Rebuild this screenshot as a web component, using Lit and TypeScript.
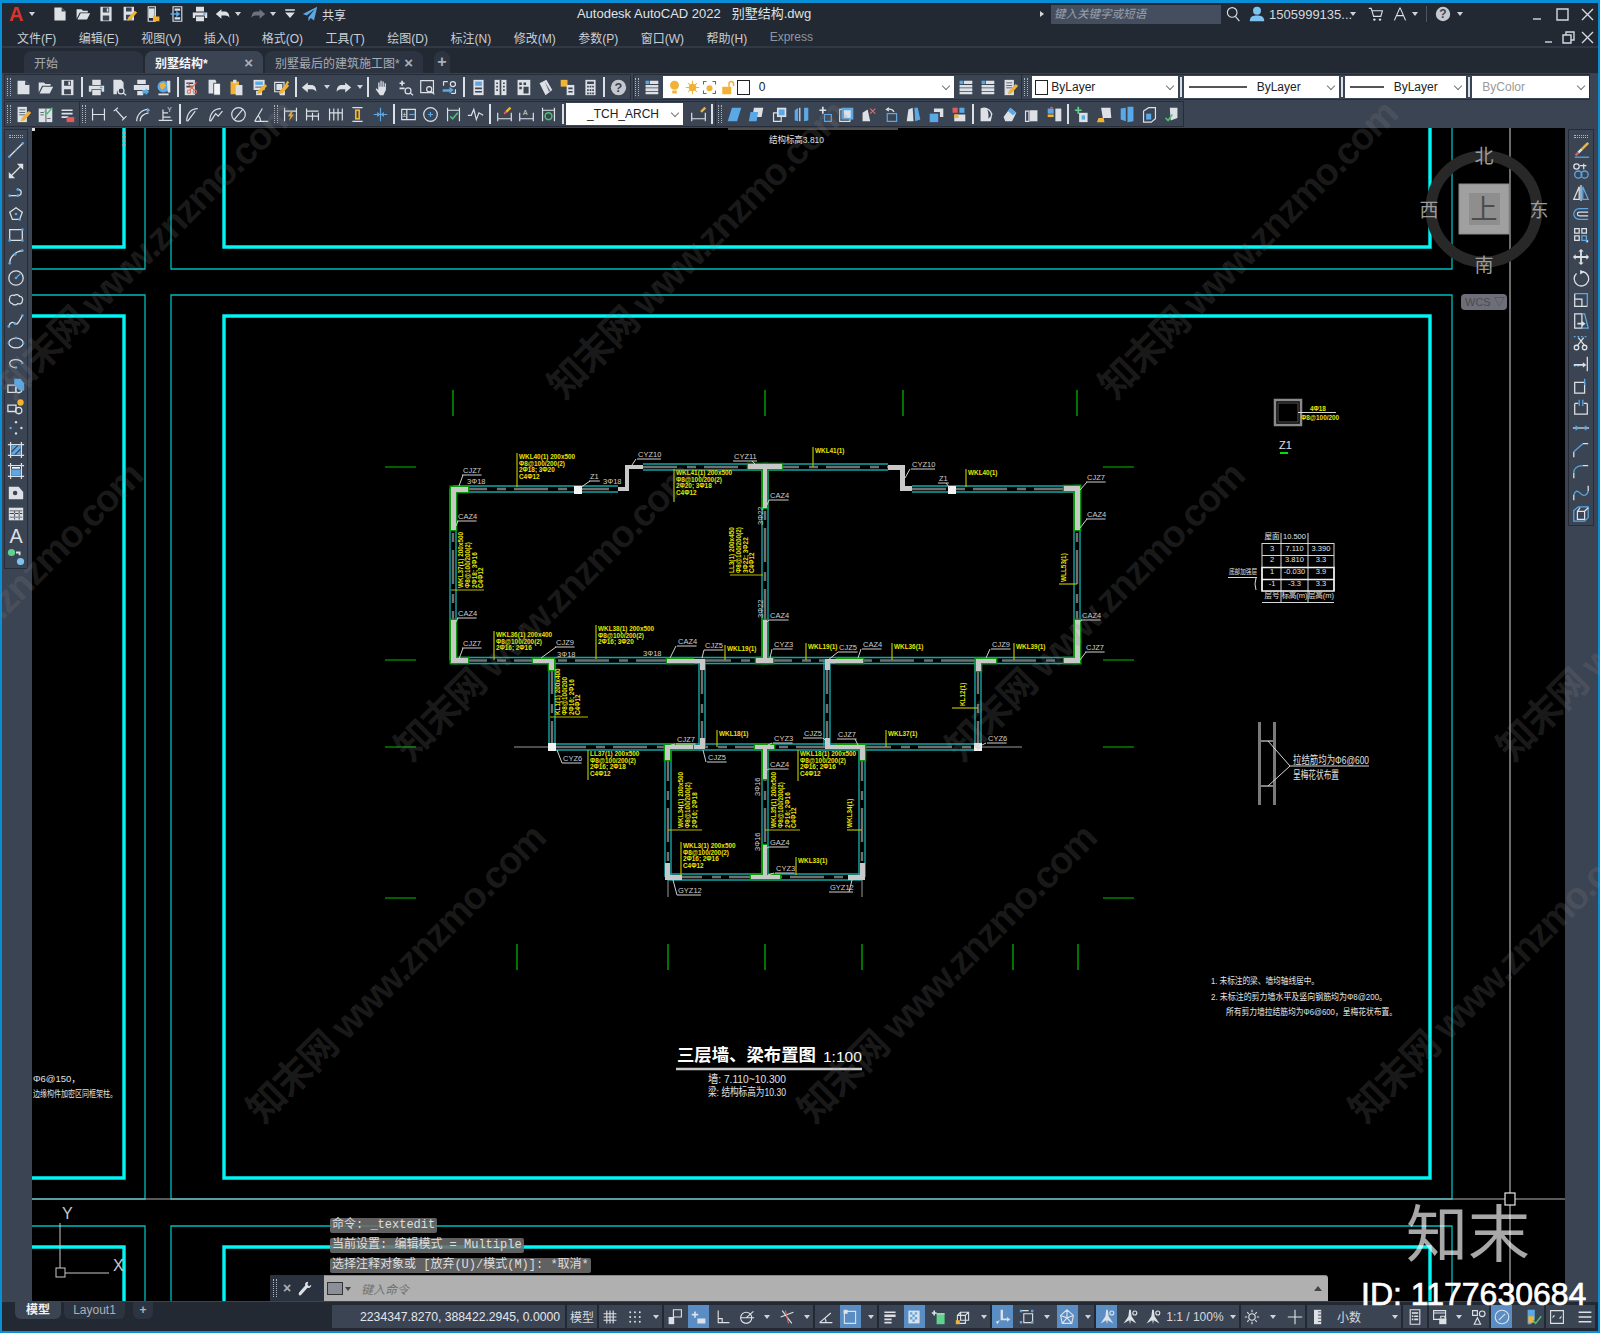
import { LitElement, html, svg, css } from 'lit';
import { customElement } from 'lit/decorators.js';

// icon fragments, all on a 20x20 box
const pencil = svg`<path class="of" d="M16 6l3 2-8 9-4 1 1-4z"/>`;
const ICONS: Record<string, any> = {
  new: svg`<path class="w" d="M3 2h9l5 5v11H3z"/><path class="dk" d="M12 2v5h5z"/>`,
  open: svg`<path class="w" d="M2 4h6l2 2h6v2H6l-4 8zM7 9h12l-4 8H3z"/>`,
  save: svg`<path class="w" d="M3 1h14v18H3z"/><path class="dk" d="M6 2h8v6H6zM6 12h8v6H6z"/><path class="w" d="M11 3h2v4h-2z"/>`,
  saveas: svg`<path class="w" d="M2 1h13v17H2z"/><path class="dk" d="M5 2h7v5H5zM5 11h7v6H5z"/>${pencil}`,
  webopen: svg`<path class="s" d="M4 1h9v18H4z"/><path class="w" d="M5 3h7v12H5z"/><path class="of" d="M10 12h3l1 1h4v6h-8z"/>`,
  webshare: svg`<path class="s" d="M5 1h11v18H5z"/><path class="w" d="M7 3h7v3H7zM7 14h7v3H7z"/><path class="bf" d="M2 9h7V6l5 4-5 4v-3H2z"/>`,
  print: svg`<path class="w" d="M5 1h10v6H5zM1 8h18v7h-3v-3H4v3H1zM5 13h10v6H5z"/><path class="bf" d="M14 9h3v2h-3z"/>`,
  undo: svg`<path class="w" d="M8 4 1 10l7 6v-4h5c2 0 4 1 5 3 0-5-2-8-6-8H8z"/>`,
  redo: svg`<path class="w" d="M12 4l7 6-7 6v-4H7c-2 0-4 1-5 3 0-5 2-8 6-8h4z"/>`,
  redodim: svg`<path class="m" d="M12 4l7 6-7 6v-4H7c-2 0-4 1-5 3 0-5 2-8 6-8h4z"/>`,
  qmenu: svg`<path class="w" d="M4 4h12v2H4zM4 8h12l-6 7z"/>`,
  plane: svg`<path class="bf" d="M19 1 1 10l5 2 10-8-8 10v5l3-4 4 3z"/>`,
  preview: svg`<path class="w" d="M4 1h9l3 3v7h-5l-3 4v3H4z"/><circle class="s" cx="13" cy="14" r="3.5"/><path class="s" d="M15.5 16.5 19 19"/>`,
  plot: svg`<path class="w" d="M5 1h10v5H5zM1 7h18v6H1zM5 14h7v5H5z"/><path class="bf" d="M11 13h4v-2l4 4-4 4v-2h-4z"/>`,
  publish: svg`<circle class="bf" cx="10" cy="9" r="7"/><path class="of" d="M6 5l5-1 2 4-4 5-3-3z"/><path class="w" d="M4 17h12v2H4zM14 2h4v14h-3z"/>`,
  cut: svg`<path class="w" d="M2 1h12v18H2z"/><path class="dk" d="M4 4h8v2H4zM4 8h8v2H4z"/><circle class="rs" cx="7" cy="15" r="2"/><circle class="rs" cx="14" cy="15" r="2"/><path class="rs" d="M8 13 16 4M13 13 5 4"/>`,
  copy: svg`<path class="w" d="M3 1h8l1 2v14H3z"/><path class="w2" d="M9 5h8v14H9z"/>`,
  paste: svg`<path class="of" d="M3 3h10v15H3z"/><path class="w" d="M6 1h4v4H6zM9 7h8v12H9z"/>`,
  paste2: svg`<path class="w" d="M3 1h13v12H3z"/><path class="bf" d="M5 3h9v4H5z"/><path class="dk" d="M5 9h9v1H5z"/><path class="w" d="M6 14h7v5H6z"/>${pencil}`,
  match: svg`<path class="s" d="M2 4h11v11H2z"/><path class="w" d="M4 6h7v7H4zM8 14h6v5H8z"/><path class="of" d="M14 7l3-5 2 2-4 5z"/>${pencil}`,
  pan: svg`<path class="w" d="M5 9V4h1.500v5h1V2H9v7h1V3h1.500v6h1V5H14v8l-3 6H7l-5-7 1-1 2 2z"/>`,
  zrt: svg`<path class="w" d="M5 2h2v2h2v2H7v2H5V6H3V4h2zM3 10h6v2H3z"/><circle class="s" cx="13" cy="14" r="3.500"/><path class="s" d="M15.500 16.500 19 19"/>`,
  zwin: svg`<path class="s" d="M2 2h15v14H2z"/><circle class="s" cx="12" cy="12" r="3"/><path class="s" d="M14 14l4 4"/>`,
  zprev: svg`<path class="s" d="M3 3h5M3 3v5M17 17h-5M17 17v-5"/><path class="bf" d="M2 12h8V9l5 4-5 4v-2H2z"/><circle class="s" cx="14" cy="6" r="3"/>`,
  props: svg`<path class="w" d="M4 1h12v18H4z"/><path class="bf" d="M6 3h8v5H6z"/><path class="dk" d="M6 10h8v2H6zM6 14h8v2H6z"/>`,
  grid4: svg`<path class="w" d="M3 1h14v18H3z"/><path class="dk" d="M9 1h2v18H9zM5 4h2v2H5zM5 8h2v2H5zM5 12h2v2H5zM13 4h2v2h-2zM13 8h2v2h-2zM13 12h2v2h-2z"/>`,
  pal: svg`<path class="w" d="M3 1h15v18H3z"/><path class="dk" d="M5 4h3v3H5zM10 4h3v3h-3zM5 9h3v3H5zM10 9h6v8h-6z"/>`,
  sheet: svg`<path class="w" d="M3 5l8-4 7 12-8 6z"/><path class="m" d="M9 3l7 11-2 1z"/>`,
  markup: svg`<path class="of" d="M2 1h8v8H2z"/><path class="w" d="M9 7h9v12H9z"/><path class="dk" d="M11 10h5v2h-5zM11 14h5v2h-5z"/>`,
  calc: svg`<path class="w" d="M4 1h12v18H4z"/><path class="dk" d="M6 3h8v3H6zM6 8h2v2H6zM9 8h2v2H9zM12 8h2v2h-2zM6 12h2v2H6zM9 12h2v2H9zM12 12h2v2h-2zM6 16h2v2H6zM9 16h2v2H9zM12 16h2v2h-2z"/>`,
  help: svg`<circle class="m2" cx="10" cy="10" r="9"/><text class="qm" x="10" y="15" text-anchor="middle">?</text>`,
  layers: svg`<path class="w" d="M8 2h10v4H8zM3 7h15v3H3zM3 11h15v3H3zM3 15h15v3H3z"/><path class="bf" d="M3 2h4v4H3z"/>`,
  note: svg`<path class="w" d="M3 1h11v18H3z"/><path class="dk" d="M5 4h7v1H5zM5 7h7v1H5zM5 10h7v1H5z"/>${pencil}`,
  check: svg`<path class="w" d="M2 3h16v16H2z"/><path class="dk" d="M10 3h1v16h-1zM4 7h4v1H4zM4 10h4v1H4zM12 14h4v1h-4z"/><path class="gs" d="M9 6l3 3 6-7"/>`,
  eras: svg`<path class="w" d="M3 4h13v2H3zM3 8h13v2H3zM3 12h8v2H3z"/><path class="rf" d="M9 13h9v6H9z"/>`,
  dimlin: svg`<path class="s" d="M3 3v14M17 3v14M3 10h14"/>`,
  dimal: svg`<path class="s" d="M2 6l5-4M12 17l5-5M4 4l10 11"/>`,
  dimarc: svg`<path class="s" d="M2 18c0-8 6-14 14-14M6 18c0-6 4-9 10-10"/><path class="bf" d="M14 2l4 3-4 3z"/>`,
  dimord: svg`<path class="s" d="M2 17h16M7 17V4M7 8h6M7 13h9"/><text class="tiny" x="12" y="7">Y</text>`,
  dimrad: svg`<path class="s" d="M2 18c0-9 5-15 13-15M3 18 12 6"/>`,
  dimjog: svg`<path class="s" d="M2 18c0-9 5-15 13-15M3 18l6-9 3 3 5-6"/>`,
  dimdia: svg`<circle class="s" cx="10" cy="10" r="8"/><path class="s" d="M5 16 15 4"/>`,
  dimang: svg`<path class="s" d="M2 18h16M2 18 11 3M9 18c0-3-1-5-3-7"/>`,
  dimq: svg`<path class="s" d="M3 2v16M17 2v16M3 6h14"/><path class="of" d="M11 6l-4 6h3l-2 6 6-8h-3l2-4z"/>`,
  dimbase: svg`<path class="s" d="M3 3v14M10 8v9M17 8v9M3 6h14M3 12h14"/>`,
  dimcont: svg`<path class="s" d="M3 3v14M8 3v14M13 3v14M18 3v14M3 8h15"/>`,
  dimsp: svg`<path class="s" d="M4 2h12M4 18h12"/><path class="of" d="M7 4h6v12H7z"/><path class="dk" d="M9 6h2v8H9z"/>`,
  dimbr: svg`<path class="bs" d="M10 2v16M2 10h5M13 10h5"/><path class="bf" d="M6 7l4 3-4 3zM14 7l-4 3 4 3z"/>`,
  tol: svg`<path class="s" d="M2 4h16v12H2zM8 4v12"/><text class="tiny" x="3" y="13">±</text><path class="bs" d="M11 10h6"/>`,
  center: svg`<circle class="s" cx="10" cy="10" r="8"/><path class="bs" d="M10 7v6M7 10h6"/>`,
  inspect: svg`<path class="s" d="M3 2v16M17 2v16M3 5h14"/><path class="gs" d="M6 12l3 3 6-7"/>`,
  jog: svg`<path class="s" d="M1 11h4l3-7 3 12 3-8 5 3"/>`,
  dimtedit: svg`<path class="s" d="M2 18V8M18 18V8M2 15h16"/><path class="of" d="M11 6l5-5 2 2-5 5z"/><path class="rf" d="M9 8l2-2 2 2-3 2z"/>`,
  dimtxt: svg`<path class="s" d="M2 18V8M18 18V8M2 15h16"/><text class="tiny" x="6" y="10">A</text>`,
  dimup: svg`<path class="s" d="M3 2v16M17 2v16M3 5h14"/><circle class="gs" cx="10" cy="12" r="4"/>`,
  dimst: svg`<path class="s" d="M2 18V8M18 18V8M2 15h16"/><path class="of" d="M12 6l5-5 2 2-5 5z"/>`,
  solbox: svg`<path class="bf" d="M7 2h11l-5 16H2z"/>`,
  solbox2: svg`<path class="w" d="M7 2h11l-2 11H5z"/><path class="bf" d="M3 7h9l-2 11H1z"/>`,
  solbox3: svg`<path class="w" d="M7 2h11v11H7z"/><path class="s" d="M3 8h9v10H3z"/><path class="bf" d="M9 4h7v7H9z"/>`,
  solwalls: svg`<path class="bf" d="M2 5l4-3v16l-4-1zM13 2h5v15l-5 1z"/><path class="s" d="M8 2v16"/>`,
  mvg: svg`<path class="w" d="M7 1h2v3h3v2H9v3H7V6H4V4h3z"/><path class="bs" d="M10 10h8v8h-8z"/>`,
  rect3: svg`<path class="s" d="M2 4h12v14H2z"/><path class="bf" d="M4 2h14v14H4z"/><path class="w" d="M7 5h8v9H7z"/>`,
  delf: svg`<path class="w" d="M3 8l6-4 3 14H3z"/><path class="rs" d="M12 3l6 6M18 3l-6 6"/>`,
  rotf: svg`<path class="bs" d="M5 9h11v9H5z"/><path class="s" d="M7 2l-3 2 3 2M4 4c5-1 8 1 9 3"/>`,
  tapf: svg`<path class="w" d="M4 4l5-2 1 16H2z"/><path class="bf" d="M11 2l4 0 3 14-6 2z"/>`,
  copyf: svg`<path class="bf" d="M2 9h10v10H2z"/><path class="w" d="M7 3h11v10h-4V7H7z"/>`,
  colorf: svg`<path class="rf" d="M3 2h6v6H3z"/><path class="bf" d="M11 2h6v6h-6z"/><path class="w" d="M5 10h13v8H5z"/><path class="of" d="M5 10h5v4H5z"/>`,
  shell: svg`<path class="w" d="M3 3c6-3 11 0 14 6l-2 9H3z"/><path class="dk" d="M11 4c3 2 5 5 4 8l-3 3c1-4 0-8-1-11z"/>`,
  clean: svg`<path class="w" d="M3 13l8-11 7 6-5 10H5z"/><path class="bf" d="M11 2l7 6-4 3-6-5z"/>`,
  sep1: svg`<path class="s" d="M3 6h4v12H3z"/><path class="w" d="M8 5h9v13H8z"/>`,
  pressp: svg`<path class="bf" d="M2 3h7v6H2z"/><path class="rf" d="M5 1h3v2H5z"/><path class="of" d="M2 10h7v3H2z"/><path class="w" d="M11 3h7v15h-7z"/>`,
  addvol: svg`<path class="gf" d="M4 1h2v3h3v2H6v3H4V6H1V4h3z"/><path class="w" d="M6 8h10v11H6z"/><path class="bf" d="M9 11h4v5H9z"/>`,
  broom: svg`<path class="w" d="M6 2h11l1 12H8z"/><path class="of" d="M3 14h6l1 5H1z"/>`,
  thick: svg`<path class="bf" d="M2 3l6-1v16l-6-2zM10 1h7v17l-7 1z"/>`,
  boxb: svg`<path class="s" d="M3 6l6-4h8v13l-5 4H3z"/><path class="bf" d="M6 9h6v7H6z"/>`,
  cleanok: svg`<path class="w" d="M8 2h9v12l-8 3z"/><path class="gs" d="M3 14l3 3 5-7"/>`,
  pick: svg`<path class="s" d="M1 9h9v8H1z"/><circle class="s" cx="13" cy="14" r="3.500"/><path class="bf" d="M8 2l7 0 4 5v8h-5L8 9z"/>`,
  pickb: svg`<path class="s" d="M1 8h9v7H1z"/><circle class="s" cx="13" cy="14" r="3.500"/><circle class="of" cx="15" cy="5" r="3.500"/>`,
  line: svg`<path class="s" d="M3 17 17 3"/><circle class="bf" cx="2.500" cy="17.500" r="1.500"/><circle class="bf" cx="10" cy="10" r="1.200"/><circle class="bf" cx="17.500" cy="2.500" r="1.500"/>`,
  xline: svg`<path class="s" d="M5 15 15 5"/><path class="w" d="M11 2h7v7zM2 11l7 7H2z"/>`,
  pline: svg`<path class="s" d="M3 13h9c5 0 5-7 0-7"/><circle class="bf" cx="3" cy="13" r="1.500"/><circle class="bf" cx="12" cy="13" r="1.500"/><circle class="bf" cx="12" cy="6" r="1.500"/>`,
  poly: svg`<path class="s" d="M10 3l7 5-3 8H6L3 8z"/><circle class="bf" cx="10" cy="10" r="1.500"/><circle class="bf" cx="14" cy="16" r="1.500"/>`,
  rect: svg`<path class="s" d="M3 4h14v12H3z"/><circle class="bf" cx="17" cy="4" r="1.500"/><circle class="bf" cx="3" cy="16" r="1.500"/><circle class="bf" cx="17" cy="16" r="1.500"/>`,
  arc: svg`<path class="s" d="M3 17c0-7 6-13 14-14"/><circle class="bf" cx="3" cy="17" r="1.500"/><circle class="bf" cx="9" cy="7" r="1.500"/><circle class="bf" cx="17" cy="3" r="1.500"/>`,
  circle: svg`<circle class="s" cx="10" cy="10" r="8"/><path class="bs" d="M10 10l5-5"/><circle class="bf" cx="10" cy="10" r="1.500"/>`,
  cloud: svg`<path class="s" d="M3 8c0-3 3-4 5-3 2-2 5-1 6 1 3 0 4 3 3 5 0 3-3 4-5 3-2 2-5 2-6 0-3 0-4-4-3-6z"/>`,
  spline: svg`<path class="s" d="M2 16c1-4 4-6 7-3 3 2 5-4 8-9"/><circle class="bf" cx="2" cy="16" r="1.500"/><circle class="bf" cx="9" cy="13" r="1.500"/><circle class="bf" cx="17" cy="4" r="1.500"/>`,
  ellipse: svg`<ellipse class="s" cx="10" cy="10" rx="8" ry="5.500"/><circle class="bf" cx="10" cy="4.500" r="1.400"/><circle class="bf" cx="2" cy="10" r="1.400"/><circle class="bf" cx="18" cy="10" r="1.400"/>`,
  earc: svg`<path class="s" d="M17 9C15 4 4 4 3 9c0 4 4 5 7 5"/><circle class="bf" cx="10" cy="14" r="1.400"/><circle class="bf" cx="17" cy="9" r="1.400"/>`,
  points: svg`<circle class="w" cx="10" cy="3.500" r="1.300"/><circle class="bf" cx="4" cy="10" r="1.300"/><circle class="w" cx="16" cy="10" r="1.300"/><circle class="w" cx="10" cy="16" r="1.300"/>`,
  hatch: svg`<path class="s" d="M4 1v18M16 1v18M1 4h18M1 16h18"/><path class="bf" d="M5 5h10v10H5z"/><path class="dk" d="M5 11l6-6h2l-8 8zM8 15l7-7v2l-5 5z"/>`,
  grad: svg`<path class="s" d="M4 1v18M16 1v18M1 4h18M1 16h18"/><path class="bf" d="M5 5h10v10H5z"/><path class="w2" d="M5 5h10v3H5z"/>`,
  region: svg`<path class="w" d="M2 3h11l5 6v8H2z"/><circle class="dk" cx="9" cy="10" r="2.500"/>`,
  table: svg`<path class="w" d="M2 3h16v14H2z"/><path class="dk" d="M3 6h14v1H3zM3 9h14v1H3zM3 13h14v1H3zM8 7v9h1V7zM13 7v9h1V7z"/>`,
  bigA: svg`<text class="bigA" x="10" y="18" text-anchor="middle">A</text>`,
  addsel: svg`<circle class="gf" cx="5" cy="5" r="4"/><circle class="lbf" cx="15" cy="15" r="4"/><path class="w" d="M10 4h5v4h-2V6h-3z"/>`,
  erase: svg`<path class="of" d="M10 8l7-7 2 2-7 7z"/><path class="w" d="M6 12l4-4 2 2-4 4z"/><path class="rf" d="M3 15l3-3 2 2-3 3z"/><path class="bs" d="M3 18h16"/>`,
  copyo: svg`<circle class="s" cx="5" cy="5" r="3"/><path class="s" d="M9 4h7M13 2v6"/><circle class="bs" cx="7" cy="14" r="4"/><circle class="bs" cx="14" cy="14" r="4"/>`,
  mirror: svg`<path class="s" d="M8 3v14H2zM10 1v18"/><path class="bs" d="M12 3v14h6z"/>`,
  offset: svg`<path class="bs" d="M18 4H8a6 6 0 0 0 0 12h10"/><path class="s" d="M18 8H8a2 2 0 0 0 0 4h10"/>`,
  array: svg`<path class="s" d="M3 3h5v5H3zM11 3h5v5h-5zM3 11h5v5H3z"/><path class="bs" d="M11 11h5v5h-5z"/><path class="w" d="M18 15v3h-3z"/>`,
  move: svg`<path class="w" d="M10 1l3 3h-2v5h5V7l3 3-3 3v-2h-5v5h2l-3 3-3-3h2v-5H4v2l-3-3 3-3v2h5V4H7z"/>`,
  rotate: svg`<path class="s" d="M12 3a8 8 0 1 1-7 2"/><path class="w" d="M9 1l5 2-5 3z"/>`,
  scale: svg`<path class="bs" d="M3 3h14v14"/><path class="s" d="M3 9h8v8H3z"/><path class="s" d="M3 3v6M11 17h6"/>`,
  stretch: svg`<path class="s" d="M3 2h8v16H3z"/><path class="bs" d="M11 2h3l4 16h-7"/><path class="w" d="M6 12h5v-2l4 3-4 3v-2H6z"/>`,
  trim: svg`<path class="bs" d="M2 3h16" stroke-dasharray="2 2"/><path class="s" d="M7 4l7 9M13 4l-7 9"/><circle class="s" cx="5" cy="15" r="2.500"/><circle class="s" cx="14" cy="15" r="2.500"/>`,
  extend: svg`<path class="s" d="M17 2v16"/><path class="bs" d="M2 12h8" stroke-dasharray="2 2"/><path class="w" d="M2 10h10V8l4 3-4 3v-2H2z"/>`,
  brkpt: svg`<path class="s" d="M3 6h11v12H3z"/><path class="bs" d="M14 2v7"/>`,
  brk: svg`<path class="s" d="M3 6v12h14V6M3 6h4M13 6h4"/><path class="bs" d="M8 2v7M12 2v7"/>`,
  join: svg`<path class="s" d="M1 10h18"/><path class="bf" d="M4 7l4 3-4 3zM16 7l-4 3 4 3z"/>`,
  chamfer: svg`<path class="s" d="M2 18v-6M12 3h6"/><path class="bs" d="M2 12l10-9"/>`,
  fillet: svg`<path class="s" d="M2 18v-6M12 4h6"/><path class="bs" d="M2 12c0-5 4-8 10-8"/>`,
  blend: svg`<path class="s" d="M2 18v-6M18 2v6"/><path class="bs" d="M2 12c3-7 6-3 8-1s6 3 8-3"/>`,
  explode: svg`<path class="bs" d="M2 6l5-4h11v12l-4 4H2z"/><path class="s" d="M6 7h8v9H6zM6 7l3-4M14 7l4-4"/>`,
  search: svg`<circle class="s" cx="9" cy="8" r="6"/><path class="s" d="M13 13l5 6"/>`,
  user: svg`<circle class="lbf" cx="10" cy="6" r="5"/><path class="lbf" d="M1 19c0-6 4-7 9-7s9 1 9 7z"/>`,
  cart: svg`<path class="s" d="M1 3h3l3 10h9l2-7H5"/><circle class="w" cx="8" cy="17" r="1.500"/><circle class="w" cx="15" cy="17" r="1.500"/>`,
  alogo: svg`<path class="s" d="M10 2 3 18M10 2l7 16M5 12h10" stroke-width="2.400"/>`,
  wrench: svg`<path class="w" d="M15 1c-3 0-5 2-4 5L3 15c-1 2-1 3 0 4s2 0 3-1l8-9c3 1 5-1 5-4l-3 2-2-2z"/>`,
  grid: svg`<path class="s" d="M6 2v16M10 2v16M14 2v16M2 6h16M2 10h16M2 14h16"/>`,
  snap: svg`<circle class="w" cx="4" cy="4" r="1.200"/><circle class="w" cx="10" cy="4" r="1.200"/><circle class="w" cx="16" cy="4" r="1.200"/><circle class="w" cx="4" cy="10" r="1.200"/><circle class="w" cx="10" cy="10" r="1.200"/><circle class="w" cx="16" cy="10" r="1.200"/><circle class="w" cx="4" cy="16" r="1.200"/><circle class="w" cx="10" cy="16" r="1.200"/><circle class="w" cx="16" cy="16" r="1.200"/>`,
  mspace: svg`<path class="s" d="M8 1h10v9H8z"/><path class="w" d="M2 10h7v9H2z"/>`,
  infer: svg`<path class="w" d="M4 3h2v3h3v2H6v3H4V8H1V6h3zM8 12h10v6H8z"/>`,
  ortho: svg`<path class="s" d="M4 2v15h14M4 12h5v5"/>`,
  polar: svg`<circle class="s" cx="9" cy="11" r="7"/><path class="s" d="M2 11h17M9 11 18 3"/>`,
  iso: svg`<path class="s" d="M4 2l12 16M2 10l16-6"/><path class="rs" d="M8 2l4 16"/>`,
  osnap: svg`<path class="s" d="M2 17h16M2 17 16 5M10 17c0-3-1-5-2-6"/>`,
  dynucs: svg`<path class="s" d="M3 3h14v15H3z"/><path class="w" d="M2 1h5v5H2z"/>`,
  lw: svg`<path class="w" d="M3 3h14v2H3zM3 7h14v3H3zM3 12h9v2H3zM3 16h9v2H3z"/>`,
  trans: svg`<path class="w" d="M3 2h14v16H3z"/><path class="bf" d="M5 4h3v3H5zM11 4h3v3h-3zM8 7h3v3H8zM5 10h3v3H5zM11 10h3v3h-3zM8 13h3v3H8z"/>`,
  qsel: svg`<path class="gf" d="M7 6h10v13H7z"/><path class="w" d="M1 4h6v2H1zM3 2h2v6H3z"/><path class="s" d="M7 6h10"/>`,
  dosnap: svg`<path class="s" d="M7 4h10v10H7zM3 8h10v10H3zM3 8l4-4M13 8l4-4"/><path class="of" d="M1 14h5v5H1z"/>`,
  ucsdyn: svg`<path class="w" d="M7 1h3v11h5v-2l4 3-4 3v-2H7z"/><path class="w" d="M6 14l-3 5-2-3z"/>`,
  gizmo: svg`<path class="s" d="M6 6h11v11H6zM2 2h10"/><path class="bf" d="M1 1h3v3H1zM15 1h3v3h-3zM1 15h3v3H1zM15 15h3v3h-3z"/>`,
  cube3: svg`<path class="s" d="M10 1l8 7-2 10H4L2 8zM10 1v10M2 8l8 3 8-3M4 18l6-7 6 7"/>`,
  annov: svg`<path class="w" d="M9 1h2l1 8 6 9-7-4-1 5-1-5-7 4 6-9z"/><circle class="s" cx="16" cy="5" r="2.500"/>`,
  gear: svg`<circle class="s" cx="10" cy="10" r="4" stroke-width="3.500"/><path class="s" d="M10 1v3M10 16v3M1 10h3M16 10h3M4 4l2 2M14 14l2 2M16 4l-2 2M6 14l-2 2" stroke-width="2.500"/>`,
  plus: svg`<path class="s" d="M10 1v18M1 10h18" stroke-width="2"/>`,
  ruler: svg`<path class="w" d="M5 1h9v18H5z"/><path class="dk" d="M10 3h4v1h-4zM10 7h4v1h-4zM10 11h4v1h-4zM10 15h4v1h-4z"/>`,
  lst: svg`<path class="s" d="M4 1h12v18H4z"/><path class="w" d="M6 4h8v2H6z"/><path class="w" d="M6 8h2v2H6zM9 8h5v2H9zM6 12h2v2H6zM9 12h5v2H9z"/>`,
  lockui: svg`<path class="s" d="M2 2h15v11H2zM2 5h15"/><path class="w" d="M9 12h9v7H9z"/><path class="s" d="M11 12V9h5v3"/>`,
  isol: svg`<path class="s" d="M2 2h6v6H2z"/><circle class="s" cx="14" cy="6" r="3.500"/><path class="s" d="M8 11l4 8H4z"/>`,
  hw: svg`<circle class="s" cx="10" cy="10" r="8.500" stroke-width="2"/><path class="s" d="M6 14l8-8"/>`,
  shield: svg`<path class="bf" d="M2 1h9v12l-5 6H2z"/><path class="of" d="M3 9h7v8H3z"/><path class="gs" d="M9 14l3 4 7-9"/>`,
  full: svg`<path class="s" d="M2 2h16v16H2z"/><path class="w" d="M4 12l4-4h-3zM16 8l-4 4h3z"/>`,
  ham: svg`<path class="w" d="M2 3h16v2H2zM2 9h16v2H2zM2 15h16v2H2z"/>`,
};

const icon = (n: string) => html`<svg class="i" viewBox="0 0 20 20">${ICONS[n]}</svg>`;

// Tokens: "|" separator, ":" grip, "v" dropdown arrow, anything else an icon name
const ROW1A = [':', 'new', 'open', 'save', '|', 'print', 'preview', 'plot', 'publish', '|', 'cut', 'copy', 'paste', 'paste2', 'match', '|', 'undo', 'v', 'redo', 'v', '|', 'pan', 'zrt', 'zwin', 'zprev', '|', 'props', 'grid4', 'pal', 'sheet', 'markup', 'calc', '|', 'help'];
const ROW2A = [':', 'note', 'check', 'eras'];
const ROW2B = [':', 'dimlin', 'dimal', 'dimarc', 'dimord', '|', 'dimrad', 'dimjog', 'dimdia', 'dimang', ':', 'dimq', 'dimbase', 'dimcont', 'dimsp', 'dimbr', '|', 'tol', 'center', 'inspect', 'jog', '|', 'dimtedit', 'dimtxt', 'dimup', '|'];
const ROW2C = [':', 'solbox', 'solbox2', 'solbox3', 'solwalls', 'mvg', 'rect3', 'delf', 'rotf', 'tapf', 'copyf', 'colorf', '|', 'shell', 'clean', 'sep1', 'pressp', '|', 'addvol', 'broom', 'thick', 'boxb', 'cleanok'];

const LEFT = ['line', 'xline', 'pline', 'poly', 'rect', 'arc', 'circle', 'cloud', 'spline', 'ellipse', 'earc', 'pick', 'pickb', 'points', 'hatch', 'grad', 'region', 'table', 'bigA', 'addsel'];
const RIGHT = ['erase', 'copyo', 'mirror', 'offset', 'array', 'move', 'rotate', 'scale', 'stretch', 'trim', 'extend', 'brkpt', 'brk', 'join', 'chamfer', 'fillet', 'blend', 'explode'];
const MENU = ['文件(F)', '编辑(E)', '视图(V)', '插入(I)', '格式(O)', '工具(T)', '绘图(D)', '标注(N)', '修改(M)', '参数(P)', '窗口(W)', '帮助(H)', 'Express'];

// status groups: "*name" is highlighted, "v" a dropdown
const STATUS: [string, string[]][] = [
  ['s1', ['grid', 'snap', 'v']],
  ['s2', ['mspace', '*infer', 'ortho', 'polar', 'v', 'iso', 'v']],
  ['s3', ['osnap', '*dynucs', 'v']],
  ['s4', ['lw', '*trans', 'qsel', 'dosnap', 'v']],
  ['s5', ['*ucsdyn', 'gizmo', 'v', '*cube3', 'v']],
];
const STATUS2: [string, string[]][] = [
  ['s7', ['gear', 'v', 'plus']],
];
const STATUS3: [string, string[]][] = [
  ['s9', ['lst']],
  ['s10', ['lockui', 'v', 'isol']],
  ['s11', ['*hw', 'shield']],
  ['s12', ['full', 'ham']],
];

// ---- drawing data, in page pixels ----
const WALLS = [
  [453, 489, 453, 660], [453, 489, 618, 489], [643, 467, 888, 467], [765, 467, 765, 660], [912, 489, 1077, 489],
  [1077, 489, 1077, 660], [453, 660.5, 1077, 660.5], [552, 660, 552, 747], [702, 660, 702, 747], [827, 660, 827, 747],
  [978, 660, 978, 747], [552, 747, 978, 747], [668, 747, 668, 877], [765, 747, 765, 877], [862, 747, 862, 877], [668, 877, 862, 877],
];
// green edged column parts
const GREEN = [
  [451, 487, 17, 5], [451, 487, 5, 43], [451, 620, 5, 43], [451, 658, 17, 5], [533, 659, 20, 4], [549, 659, 5, 11],
  [667, 659, 26, 4], [748, 464, 34, 5], [763, 464, 4, 44], [763, 620, 4, 43], [756, 658, 17, 5], [837, 659, 26, 4],
  [976, 659, 20, 4], [976, 659, 5, 12], [1064, 486, 16, 5], [1075, 486, 5, 44], [1075, 620, 5, 43], [1064, 658, 16, 5],
  [665, 745, 28, 4], [665, 745, 5, 15], [755, 745, 19, 4], [763, 745, 4, 34], [763, 845, 4, 32], [751, 875, 29, 4],
  [836, 745, 29, 4], [860, 745, 5, 15],
];
// plain grey column parts
const GREY = [
  [618, 487, 11, 4], [625, 465, 4, 26], [625, 465, 18, 4], [888, 465, 17, 5], [900, 465, 5, 26], [900, 486, 12, 5],
  [693, 659, 12, 4], [700, 659, 5, 11], [825, 659, 12, 4], [825, 659, 5, 11], [694, 745, 11, 4], [700, 738, 5, 11],
  [825, 745, 11, 4], [825, 738, 5, 11], [665, 863, 5, 17], [665, 875, 17, 5], [848, 875, 17, 5], [860, 863, 5, 17],
];
const SQUARES = [[578, 490], [952, 490], [552, 747], [978, 747]];
// [x, y, leader-length, lines]; text hangs from a yellow flag
const FLAGS: [number, number, number, string[]][] = [
  [517, 453, 34, ['WKL40(1) 200x500', 'Φ8@100/200(2)', '2Φ18; 3Φ20', 'C4Φ12']],
  [674, 469, 33, ['WKL41(1) 200x500', 'Φ8@100/200(2)', '2Φ20; 3Φ18', 'C4Φ12']],
  [494, 631, 29, ['WKL36(1) 200x400', 'Φ8@100/200(2)', '2Φ16; 2Φ16']],
  [596, 625, 34, ['WKL38(1) 200x500', 'Φ8@100/200(2)', '2Φ16; 3Φ20']],
  [725, 645, 15, ['WKL19(1)']],
  [813, 447, 20, ['WKL41(1)']],
  [966, 469, 18, ['WKL40(1)']],
  [806, 643, 17, ['WKL19(1)']],
  [892, 643, 17, ['WKL36(1)']],
  [1014, 643, 17, ['WKL39(1)']],
  [717, 730, 17, ['WKL18(1)']],
  [886, 730, 17, ['WKL37(1)']],
  [588, 750, 30, ['LL37(1) 200x500', 'Φ8@100/200(2)', '2Φ16; 2Φ18', 'C4Φ12']],
  [798, 750, 31, ['WKL18(1) 200x500', 'Φ8@100/200(2)', '2Φ16; 2Φ16', 'C4Φ12']],
  [681, 842, 33, ['WKL3(1) 200x500', 'Φ8@100/200(2)', '2Φ16; 2Φ16', 'C4Φ12']],
  [796, 857, 18, ['WKL33(1)']],
];
// [x-start, y, x-end, first-line-x, lines]; text reads upward from a flat flag
const VFLAGS: [number, number, number, number, string[]][] = [
  [451, 590, 484, 463, ['WKL37(1) 200x500', 'Φ8@100/200(2)', '2Φ18; 3Φ16', 'C4Φ12']],
  [730, 575, 763, 734, ['LL3(1) 200x450', 'Φ8@100/200(2)', '3Φ22; 3Φ22', 'C4Φ12']],
  [1059, 584, 1077, 1066, ['WLL53(1)']],
  [550, 717, 588, 560, ['KL1(1) 200x400', 'Φ8@100/200', '2Φ16; 2Φ16', 'C4Φ12']],
  [952, 708, 978, 965, ['KL12(1)']],
  [668, 830, 702, 683, ['WKL34(1) 200x500', 'Φ8@100/200(2)', '2Φ16; 2Φ18']],
  [765, 830, 800, 776, ['WKL35(1) 200x500', 'Φ8@100/200(2)', '2Φ16; 2Φ16', 'C4Φ12']],
  [847, 830, 862, 852, ['WKL34(1)']],
];
// [text-x, baseline, text, leader-from-x, leader-to-x, leader-to-y]
const TAGS: [number, number, string, number, number, number][] = [
  [463, 473, 'CJZ7', 463, 459, 486], [458, 519, 'CAZ4', 458, 456, 526], [458, 616, 'CAZ4', 458, 456, 622], [463, 646, 'CJZ7', 463, 459, 659],
  [556, 645, 'CJZ9', 556, 541, 658], [590, 479, 'Z1', 590, 580, 488], [638, 457, 'CYZ10', 636, 632, 465], [734, 459, 'CYZ11', 752, 756, 465],
  [770, 498, 'CAZ4', 769, 767, 505], [912, 467, 'CYZ10', 910, 905, 478], [939, 481, 'Z1', 946, 950, 488], [1087, 480, 'CJZ7', 1087, 1080, 490],
  [1087, 517, 'CAZ4', 1087, 1080, 528], [1082, 618, 'CAZ4', 1082, 1079, 622], [1086, 650, 'CJZ7', 1086, 1080, 660], [770, 618, 'CAZ4', 769, 767, 622],
  [774, 647, 'CYZ3', 772, 770, 658], [839, 650, 'CJZ5', 838, 828, 660], [863, 647, 'CAZ4', 861, 858, 658], [992, 647, 'CJZ9', 990, 986, 658],
  [678, 644, 'CAZ4', 676, 670, 658], [705, 648, 'CJZ5', 704, 702, 658], [563, 761, 'CYZ6', 562, 557, 750], [677, 742, 'CJZ7', 675, 668, 746],
  [708, 760, 'CJZ5', 706, 703, 750], [774, 741, 'CYZ3', 772, 768, 745], [770, 767, 'CAZ4', 769, 767, 770], [770, 845, 'GAZ4', 769, 767, 848],
  [776, 871, 'CYZ3', 774, 768, 875], [804, 736, 'CJZ5', 823, 830, 745], [838, 737, 'CJZ7', 855, 858, 745], [988, 741, 'CYZ6', 986, 982, 745],
  [678, 893, 'GYZ12', 677, 673, 880], [830, 890, 'GYZ12', 849, 852, 880],
];
const THIN_TXT: [number, number, string][] = [[467, 484, '3Φ18'], [603, 484, '3Φ18'], [557, 657, '3Φ18'], [643, 656, '3Φ18']];
const VTHIN_TXT: [number, number, string][] = [[763, 525, '3Φ22'], [763, 618, '3Φ22'], [760, 796, '3Φ16'], [760, 851, '3Φ16']];
const TABLE: [string, string, string, number][] = [
  ['屋面', '10.500', '', 539], ['3', '7.110', '3.390', 551], ['2', '3.810', '3.3', 562], ['1', '-0.030', '3.9', 574], ['-1', '-3.3', '3.3', 586], ['层号', '标高(m)', '层高(m)', 598],
];
const WATERMARKS = [[13, 401], [564, 401], [1115, 401], [411, 763], [962, 763], [1513, 763], [-140, 763], [263, 1125], [814, 1125], [1365, 1125]];

@customElement('app-root')
export class AppRoot extends LitElement {
  static styles = css`
    :host {
      display: block;
      position: relative;
      width: 1600px;
      height: 1333px;
      overflow: hidden;
      background: #222933;
      font-family: 'Liberation Sans', 'Noto Sans CJK SC', sans-serif;
      color: #d5d9df;
    }
    .win {
      height: 100%;
      box-sizing: border-box;
      display: flex;
      flex-direction: column;
      border-top: 3px solid #0a8ed6;
      border-left: 2px solid #0a8ed6;
      border-right: 2px solid #0a8ed6;
      border-bottom: 2px solid #0a8ed6;
    }

    /* icon colours */
    .i { width: 17px; height: 17px; display: block; flex: none; }
    .w { fill: #dde1e6; }
    .w2 { fill: #f2f4f6; stroke: #3b4453; }
    .m { fill: #6b7380; }
    .m2 { fill: #c5c9cf; }
    .dk { fill: #3b4453; }
    .s { fill: none; stroke: #dde1e6; stroke-width: 1.4; }
    .bs { fill: none; stroke: #5aa9e6; stroke-width: 1.4; }
    .bf { fill: #5aa9e6; }
    .lbf { fill: #7cc3f2; }
    .of { fill: #f2b233; }
    .rf { fill: #e25a5a; }
    .rs { fill: none; stroke: #e2705a; stroke-width: 1.3; }
    .gf { fill: #5fd38d; }
    .gs { fill: none; stroke: #4cc46e; stroke-width: 1.8; }
    .qm { font: bold 15px 'Liberation Sans', sans-serif; fill: #3b4453; }
    .tiny { font: 8px 'Liberation Sans', sans-serif; fill: #dde1e6; }
    .bigA { font: 22px 'Liberation Sans', sans-serif; fill: #dde1e6; }

    /* title */
    .title {
      height: 25px;
      padding-bottom: 3px;
      box-sizing: border-box;
      display: flex;
      align-items: center;
      flex: none;
      position: relative;
    }
    .logo { font: bold 20px 'Liberation Sans', sans-serif; color: #d9332b; width: 20px; margin-left: 7px; }
    .qa { display: flex; align-items: center; margin-left: 13px; }
    .qa .btn { width: 23.4px; display: flex; justify-content: center; }
    .qa .i { width: 16px; height: 16px; }
    .qa .dd { width: 11px; }
    .qa .qm-btn { width: 11px; margin-left: 4px; }
    .qa .plane { margin-left: 3px; }
    .arrow { width: 0; height: 0; border: 3px solid transparent; border-top: 4px solid #cfd3d9; border-bottom: 0; display: block; }
    .share { font-size: 12px; }
    .doc { font-size: 13px; margin-left: 231px; display: flex; align-items: center; gap: 11px; color: #dfe2e6; line-height: 16px; }
    .right { margin-left: auto; display: flex; align-items: center; }
    .find { margin-right: 4px; border: 3px solid transparent; border-left: 4px solid #d5d9df; }
    .searchbox {
      width: 170px;
      height: 19px;
      background: #454e5e;
      font-size: 11.5px;
      font-style: italic;
      color: #9aa2ae;
      line-height: 19px;
      padding-left: 3px;
      box-sizing: border-box;
    }
    .right .i { width: 16px; height: 16px; }
    .r-search { margin-left: 4px; }
    .r-user { margin-left: 8px; }
    .uname { font-size: 13px; margin-left: 4px; width: 78px; white-space: nowrap; }
    .r-arrow { margin: 0 12px 0 3px; }
    .r-a { margin-left: 8px; }
    .r-a2 { margin: 0 8px 0 4px; }
    .vbar { width: 1px; height: 16px; background: #4b5564; margin-right: 8px; }
    .r-help { margin-right: 6px; }
    .winbtns { display: flex; margin-left: 68px; align-items: center; gap: 12px; margin-right: 4px; }
    .winbtns svg { width: 13px; height: 13px; display: block; }
    .winline { fill: none; stroke: #d5d9df; stroke-width: 1.4; }

    /* menu */
    .menu {
      height: 20px;
      flex: none;
      display: flex;
      align-items: center;
      gap: 22.5px;
      font-size: 12px;
      padding-left: 15px;
      color: #c9ced5;
      border-bottom: 2px solid #313845;
      box-sizing: border-box;
    }
    .menu .winbtns { margin-left: auto; gap: 6px; margin-right: 4px; }
    .menu .exp { color: #8f96a1; }

    /* file tabs */
    .tabs {
      height: 25px;
      flex: none;
      display: flex;
      align-items: flex-end;
      padding-left: 22px;
      box-sizing: border-box;
    }
    .tab {
      height: 22px;
      display: flex;
      align-items: center;
      font-size: 12px;
      background: #2d3441;
      color: #a7adb7;
      padding: 0 10px 0 10px;
      border-radius: 8px 8px 0 0;
      box-sizing: border-box;
      margin-right: 2px;
    }
    .tab.t1 { width: 119px; }
    .tab.t2 { width: 118px; background: #3b4453; color: #f4f5f7; font-weight: bold; justify-content: space-between; }
    .tab.t3 { width: 158px; justify-content: space-between; }
    .tab.t4 { width: 16px; margin-left: 9px; padding: 0; justify-content: center; font-size: 16px; font-weight: bold; color: #aab0ba; }
    .x { font-size: 15px; font-weight: bold; color: #aab0ba; }

    /* toolbars */
    .bars { background: #3b4453; flex: none; height: 55px; box-sizing: border-box; border-top: 1px solid #39404d; }
    .row { display: flex; height: 26px; align-items: center; padding-left: 3px; }
    .row + .row { margin-top: 1px; }
    .tg {
      height: 24px;
      display: flex;
      align-items: center;
      box-sizing: border-box;
      box-shadow: 0 0 0 1px #262d39;
      margin-right: 1px;
    }
    .tg.lg { margin-left: 3px; }
    .tk { width: 22.4px; display: flex; justify-content: center; flex: none; }
    .tk .i { width: 17px; height: 17px; }
    .tv { width: 11px; display: flex; justify-content: center; flex: none; }
    .sp { width: 2px; height: 20px; background: #dbe0e6; margin: 0 2px; flex: none; }
    .gp { width: 4px; height: 18px; margin: 0 1.500px; flex: none; border-left: 1px dotted #aeb5bf; border-right: 1px dotted #aeb5bf; box-sizing: border-box; }
    .combo {
      height: 22px;
      background: #fff;
      color: #222;
      font-size: 12px;
      display: flex;
      align-items: center;
      box-sizing: border-box;
      position: relative;
      flex: none;
      white-space: nowrap;
    }
    .combo::after {
      content: '';
      position: absolute;
      right: 5px;
      top: 7px;
      width: 5px;
      height: 5px;
      border-right: 1px solid #777;
      border-bottom: 1px solid #777;
      transform: rotate(45deg);
    }
    .c-layer { width: 291px; padding-left: 4px; gap: 2.500px; }
    .c-layer .i { width: 15px; height: 15px; }
    .c-color { width: 146px; padding-left: 3px; margin-left: 3px; }
    .c-lt { width: 155px; padding-left: 5px; }
    .c-lw { width: 121px; padding-left: 5px; }
    .c-off { width: 117px; padding-left: 10px; color: #9a9a9a; }
    .c-tch { width: 117px; padding-left: 21px; margin-right: 4px; }
    .swatch { width: 13px; height: 15px; border: 1px solid #222; margin-right: 3px; box-sizing: border-box; flex: none; }
    .lsample { height: 2px; background: #555; flex: none; margin-right: 6px; }
    .l-a { width: 58px; }
    .l-b { width: 34px; }
    .num { margin-left: 3px; }

    /* work area */
    .main { flex: 1; display: flex; min-height: 0; background: #3b4453; }
    .side { width: 30px; flex: none; padding-top: 2px; box-sizing: border-box; }
    .side.r { width: 33px; padding-left: 4px; }
    .side.l { padding-left: 3px; }
    .dock {
      width: 24px;
      box-sizing: border-box;
      box-shadow: 0 0 0 1px #262d39;
      display: flex;
      flex-direction: column;
      align-items: center;
    }
    .side.l .dock { width: 22px; }
    .dgrip { height: 3px; width: 14px; margin: 5px 0 1px; border-top: 1px dotted #aeb5bf; border-bottom: 1px dotted #aeb5bf; box-sizing: border-box; }
    .dk-i { height: 21.450px; display: flex; align-items: center; }
    .dk-i .i { width: 18px; height: 18px; }
    .canvas { flex: 1; background: #000; position: relative; overflow: hidden; }
    .canvas > svg.d { position: absolute; left: 0; top: 0; display: block; }

    /* drawing */
    .thick { fill: none; stroke: #00f5f5; stroke-width: 3.400; }
    .thin { fill: none; stroke: #00bcbc; stroke-width: 1.300; }
    .cross { stroke: #b2b2b2; stroke-width: 1.200; fill: none; }
    .axis { stroke: #00c000; stroke-width: 1.200; }
    .wt { stroke: #14a6a6; stroke-width: 1.400; fill: none; }
    .wc { stroke: #707070; stroke-width: 2.400; stroke-dasharray: 34 10 9 8; fill: none; }
    .col-g { fill: #c8c8c8; stroke: #0c9a0c; stroke-width: 2.600; }
    .col-p { fill: #c8c8c8; }
    .sq { fill: #f2f2f2; }
    .gl { stroke: #9a9a9a; stroke-width: 1; }
    .yl { stroke: #bcbc00; stroke-width: 1.200; }
    .ytxt { fill: #e6e600; font: bold 6.400px 'Liberation Sans', 'Noto Sans CJK SC', sans-serif; }
    .wtag { fill: #cfcfcf; font: 7.500px 'Liberation Sans', sans-serif; }
    .tagline { stroke: #d0d0d0; stroke-width: 1; fill: none; }
    .cad { fill: #e0e0e0; font-family: 'Liberation Sans', 'Noto Sans CJK SC', sans-serif; }
    .f6 { font-size: 7px; }
    .f8 { font-size: 7.500px; }
    .f9 { font-size: 9.500px; }
    .f11 { font-size: 11px; }
    .f12 { font-size: 12px; }
    .ttl { font-size: 17px; font-weight: bold; fill: #fff; }
    .ttl2 { font-size: 15.500px; fill: #fff; }
    .underbar { stroke: #c9c9c9; stroke-width: 2.600; }
    .wline { stroke: #d8d8d8; stroke-width: 1; fill: none; }
    .wline2 { stroke: #f2f2f2; stroke-width: 1.600; fill: none; }
    .glink { fill: none; stroke: #7f7f7f; stroke-width: 2.200; }
    .gbar { fill: #7a7a7a; }
    .zgreen { fill: #00e000; }
    .ucs { stroke: #c9c9c9; stroke-width: 1; fill: none; }
    .ucstxt { fill: #c9c9c9; font: 16px 'Liberation Sans', sans-serif; }
    .ring { fill: none; stroke: #282828; stroke-width: 11; }
    .dirs { fill: #9c9c9c; font: 19px 'Noto Sans CJK SC', sans-serif; }
    .cube { fill: #a0a0a0; stroke: #8a8a8a; }
    .cube2 { fill: #8e8e8e; }
    .cube4 { fill: #4c4c4c; font: 27px 'Noto Sans CJK SC', sans-serif; }

    .wcs {
      position: absolute;
      left: 1429px;
      top: 166px;
      width: 46px;
      height: 16px;
      background: #6e6e78;
      border-radius: 4px;
      color: #4a4a50;
      font-size: 11px;
      line-height: 16px;
      padding-left: 4px;
      box-sizing: border-box;
    }
    .hist {
      position: absolute;
      left: 298px;
      top: 1090px;
      display: flex;
      flex-direction: column;
      align-items: flex-start;
      gap: 5px;
      font: 12px 'Liberation Mono', 'Noto Sans CJK SC', monospace;
    }
    .hist span { background: rgba(110, 110, 110, 0.88); color: #dedede; height: 15px; line-height: 15px; padding: 0 2px; border-radius: 2px; }
    .cmd {
      position: absolute;
      left: 238px;
      bottom: 0;
      width: 1058px;
      height: 26px;
      display: flex;
      align-items: stretch;
    }
    .cmd-l { width: 54px; background: #2a3240; display: flex; align-items: center; gap: 6px; padding-left: 3px; box-sizing: border-box; }
    .cmd-l .gp { margin: 0; }
    .cmd-l .x { font-size: 14px; }
    .cmd-l .i { width: 15px; height: 15px; }
    .cmd-r { flex: 1; background: #b0b0b0; display: flex; align-items: center; padding: 0 6px 0 3px; border-top: 1px solid #8a8a8a; border-radius: 0 3px 0 0; color: #707070; font-size: 12px; font-style: italic; }
    .cmd-ic { width: 16px; height: 13px; border: 1px solid #333; background: #8a8f98; margin-right: 2px; flex: none; box-sizing: border-box; }
    .cmd-t { margin-left: 10px; flex: 1; }
    .darrow { width: 0; height: 0; border: 3px solid transparent; border-top: 4px solid #444; border-bottom: 0; }
    .uarrow { width: 0; height: 0; border: 4px solid transparent; border-bottom: 5px solid #444; border-top: 0; }

    /* status */
    .status { height: 30px; flex: none; display: flex; background: #222933; align-items: center; font-size: 12px; border-top: 1px solid #3b4453; box-sizing: border-box; }
    .ltabs { width: 330px; display: flex; align-self: flex-start; padding-left: 13px; box-sizing: border-box; height: 17px; }
    .ltab { height: 17px; line-height: 17px; text-align: center; border-radius: 0 0 6px 6px; margin-right: 3px; background: #2d3441; color: #aab0ba; font-size: 12px; }
    .lt1 { width: 46px; background: #3b4453; color: #f0f1f3; font-weight: bold; }
    .lt2 { width: 61px; }
    .lt3 { width: 20px; margin-left: 5px; font-weight: bold; }
    .sg { height: 23px; background: #3b4453; display: flex; align-items: center; justify-content: space-between; flex: none; margin-right: 2px; box-sizing: border-box; }
    .sk { width: 21px; height: 23px; display: flex; align-items: center; justify-content: center; flex: none; }
    .sk.on { background: #5a8dc4; }
    .sk .i { width: 16px; height: 16px; }
    .sv { width: 13px; display: flex; justify-content: center; flex: none; }
    .coords { width: 233px; justify-content: flex-end; padding-right: 5px; font-size: 12.200px; color: #e4e6ea; }
    .sm { width: 30px; justify-content: center; }
    .s1 { width: 63px; }
    .s2 { width: 149px; }
    .s3 { width: 62px; }
    .s4 { width: 111px; }
    .s5 { width: 102px; }
    .s6 { width: 143px; }
    .s7 { width: 64px; }
    .s8 { width: 94px; }
    .s9 { width: 24px; justify-content: center; }
    .s10 { width: 60px; }
    .s11 { width: 53px; }
    .s12 { width: 49px; margin-right: 0; }
    .s-text { font-size: 12px; flex: none; white-space: nowrap; }
    .s-dec { width: 60px; padding-left: 9px; box-sizing: border-box; }

    /* page-wide stamp */
    .stamp { position: absolute; left: 0; top: 0; pointer-events: none; }
    .wm { font: bold 38px 'Liberation Sans', 'Noto Sans CJK SC', sans-serif; fill: rgba(135, 135, 135, 0.19); }
    .brand { font: 62px 'Noto Sans CJK SC', sans-serif; fill: rgba(255, 255, 255, 0.66); }
    .idt { font: 32px 'Liberation Sans', sans-serif; fill: #fff; stroke: #fff; stroke-width: 0.7px; }
  `;

  private tokens(list: string[]) {
    return list.map((t) => {
      if (t === '|') return html`<span class="sp"></span>`;
      if (t === ':') return html`<span class="gp"></span>`;
      if (t === 'v') return html`<span class="tv"><span class="arrow"></span></span>`;
      return html`<span class="tk">${icon(t)}</span>`;
    });
  }

  private statusGroup(groups: [string, string[]][]) {
    return groups.map(
      ([name, items]) => html`<div class="sg ${name}">
        ${items.map((t) => {
          if (t === 'v') return html`<span class="sv"><span class="arrow"></span></span>`;
          const on = t.startsWith('*');
          return html`<span class="sk ${on ? 'on' : ''}">${icon(on ? t.slice(1) : t)}</span>`;
        })}
      </div>`,
    );
  }

  private titleBar() {
    return html`<div class="title">
      <span class="logo">A</span>
      <span class="arrow"></span>
      <div class="qa">
        ${['new', 'open', 'save', 'saveas', 'webopen', 'webshare', 'print', 'undo'].map((n) => html`<span class="btn">${icon(n)}</span>`)}
        <span class="dd"><span class="arrow"></span></span>
        <span class="btn">${icon('redodim')}</span>
        <span class="dd"><span class="arrow"></span></span>
        <span class="btn qm-btn">${icon('qmenu')}</span>
        <span class="btn plane">${icon('plane')}</span>
      </div>
      <span class="share">共享</span>
      <span class="doc"><span>Autodesk AutoCAD 2022</span><span>别墅结构.dwg</span></span>
      <div class="right">
        <span class="find"></span>
        <span class="searchbox">键入关键字或短语</span>
        <span class="r-search">${icon('search')}</span>
        <span class="r-user">${icon('user')}</span>
        <span class="uname">1505999135...</span>
        <span class="arrow r-arrow"></span>
        ${icon('cart')}
        <span class="r-a">${icon('alogo')}</span>
        <span class="arrow r-a2"></span>
        <span class="vbar"></span>
        <span class="r-help">${icon('help')}</span>
        <span class="arrow"></span>
        <div class="winbtns">
          <svg viewBox="0 0 13 13"><path class="winline" d="M2 11h8"/></svg>
          <svg viewBox="0 0 13 13"><path class="winline" d="M1 1h11v11H1z"/></svg>
          <svg viewBox="0 0 13 13"><path class="winline" d="M1 1l11 11M12 1 1 12"/></svg>
        </div>
      </div>
    </div>`;
  }

  private toolbars() {
    return html`<div class="bars">
      <div class="row">
        <div class="tg">${this.tokens(ROW1A)}</div>
        <div class="tg lg">
          ${this.tokens([':', 'layers'])}
          <div class="combo c-layer">
            <svg class="i" viewBox="0 0 20 20"><circle class="of" cx="10" cy="7" r="6"/><path class="of" d="M7 14h6v4H7z"/></svg>
            <svg class="i" viewBox="0 0 20 20"><circle class="of" cx="10" cy="10" r="5"/><path d="M10 1v18M1 10h18M4 4l12 12M16 4 4 16" stroke="#f2b233" stroke-width="1.400"/></svg>
            <svg class="i" viewBox="0 0 20 20"><path d="M2 6V2h4M14 2h4v4M18 14v4h-4M6 18H2v-4" fill="none" stroke="#667" stroke-width="1.400"/><circle class="of" cx="10" cy="11" r="4"/></svg>
            <svg class="i" viewBox="0 0 20 20"><path class="of" d="M3 9h12v10H3z"/><path d="M12 9V5a3 3 0 0 1 6 0v3" fill="none" stroke="#f2b233" stroke-width="2"/></svg>
            <span class="swatch"></span><span class="num">0</span>
          </div>
          ${this.tokens(['layers', 'layers', 'note'])}
        </div>
        <div class="tg">
          <span class="gp"></span>
          <div class="combo c-color"><span class="swatch"></span>ByLayer</div>
          <span class="sp"></span>
          <div class="combo c-lt"><span class="lsample l-a"></span>&nbsp;ByLayer</div>
          <span class="sp"></span>
          <div class="combo c-lw"><span class="lsample l-b"></span>&nbsp;ByLayer</div>
          <span class="sp"></span>
          <div class="combo c-off">ByColor</div>
        </div>
      </div>
      <div class="row">
        <div class="tg">${this.tokens(ROW2A)}</div>
        <div class="tg">
          ${this.tokens(ROW2B)}
          <div class="combo c-tch">_TCH_ARCH</div>
          ${this.tokens(['dimst', '|'])}
        </div>
        <div class="tg">${this.tokens(ROW2C)}</div>
      </div>
    </div>`;
  }

  private drawing() {
    return svg`
      <g>
        <path class="thin" d="M145 128V269H32M171 128V269H1452V128M32 295H145V1199H32M1452 295H171V1199H1452ZM32 1226H145V1301M1452 1301V1226H171V1301"/>
        <path class="thick" d="M224 128V247H1430V128M32 247H124V128M32 316H124V1178H32M224 316H1430V1178H224ZM32 1247H124V1301M224 1301V1247H1430V1301"/>
      </g>
      <path class="cross" d="M1510 128V1301M32 1199H1565"/>
      <rect x="1505" y="1193" width="10" height="12" fill="#000" stroke="#e8e8e8" stroke-width="1.200"/>
      <rect x="32" y="128" width="3" height="3" fill="#ddd"/>
      <path d="M124 132v14" stroke="#aaa" stroke-width="3" stroke-dasharray="2 2"/>

      <path class="axis" d="M453 390v26M765 390v26M903 390v26M1077 390v26M385 467h31M385 660h31M385 747h31M385 898h31M1103 467h31M1103 660h31M1103 747h31M1103 898h31M517 944v26M668 944v26M765 944v26M862 944v26M1013 944v26M1078 944v26"/>

      <path class="gl" d="M728 129H898M514 747H552M978 747H1022M668 880V897M862 880V897"/>
      <text class="cad f9" x="769" y="143" textLength="55" lengthAdjust="spacingAndGlyphs">结构标高3.810</text>

      ${WALLS.map(([x1, y1, x2, y2]) => {
        const h = y1 === y2;
        const dx = h ? 0 : 3;
        const dy = h ? 3 : 0;
        return svg`
          <line class="wc" x1=${x1} y1=${y1} x2=${x2} y2=${y2}/>
          <line class="wt" x1=${x1 - dx} y1=${y1 - dy} x2=${x2 - dx} y2=${y2 - dy}/>
          <line class="wt" x1=${x1 + dx} y1=${y1 + dy} x2=${x2 + dx} y2=${y2 + dy}/>`;
      })}
      ${GREEN.map(([x, y, w, h]) => svg`<rect class="col-g" x=${x} y=${y} width=${w} height=${h}/>`)}
      ${GREEN.map(([x, y, w, h]) => svg`<rect class="col-p" x=${x} y=${y} width=${w} height=${h}/>`)}
      ${GREY.map(([x, y, w, h]) => svg`<rect class="col-p" x=${x} y=${y} width=${w} height=${h}/>`)}
      ${SQUARES.map(([x, y]) => svg`<rect class="sq" x=${x - 4} y=${y - 4} width="8" height="8"/>`)}

      ${FLAGS.map(([x, y, len, lines]) => svg`
        <line class="yl" x1=${x} y1=${y} x2=${x} y2=${y + len}/>
        ${lines.map((t, i) => svg`<text class="ytxt" x=${x + 2} y=${y + 6 + i * 6.6}>${t}</text>`)}`)}
      ${VFLAGS.map(([x1, y, x2, tx, lines]) => svg`
        <line class="yl" x1=${x1} y1=${y} x2=${x2} y2=${y}/>
        ${lines.map((t, i) => svg`<text class="ytxt" transform="translate(${tx + i * 6.8} ${y - 2}) rotate(-90)">${t}</text>`)}`)}
      ${TAGS.map(([x, y, t, fx, lx, ly]) => svg`
        <text class="wtag" x=${x} y=${y}>${t}</text>
        <path class="tagline" d="M${x - 1} ${y + 2}H${x + t.length * 4.4 + 1}M${fx} ${y + 2}L${lx} ${ly}"/>`)}
      ${THIN_TXT.map(([x, y, t]) => svg`<text class="wtag" x=${x} y=${y}>${t}</text>`)}
      ${VTHIN_TXT.map(([x, y, t]) => svg`<text class="wtag" transform="translate(${x} ${y}) rotate(-90)">${t}</text>`)}

      <!-- column Z1 -->
      <rect x="1275" y="400" width="26" height="25" fill="none" stroke="#8a8a8a" stroke-width="2.500"/>
      <rect x="1278" y="403" width="20" height="19" fill="#000" stroke="#555"/>
      <path class="wline" d="M1298 412.500H1336"/>
      <text class="ytxt" x="1310" y="411">4Φ18</text>
      <text class="ytxt" x="1301" y="420">Φ8@100/200</text>
      <text class="cad f11" x="1279" y="449">Z1</text>
      <rect class="zgreen" x="1280" y="452" width="8" height="2"/>

      <!-- floor table -->
      <path class="wline" d="M1262 543.500H1334M1262 555.500H1334M1262 602.500H1334M1281 533V602M1308 533V602M1262 543V591M1334 543V591"/>
      <path class="wline2" d="M1262 567.500H1334V591H1262ZM1262 579.500H1334"/>
      ${TABLE.map(
        ([a, b, c, y]) => svg`
          <text class="cad f8" x="1272" y=${y} text-anchor="middle">${a}</text>
          <text class="cad f8" x="1294.500" y=${y} text-anchor="middle">${b}</text>
          <text class="cad f8" x="1321" y=${y} text-anchor="middle">${c}</text>`,
      )}
      <text class="cad f6" x="1229" y="574" textLength="28" lengthAdjust="spacingAndGlyphs">底部加强层</text>
      <path class="wline" d="M1228 577.500H1257M1256 578l-1 6 1 6"/>

      <!-- tie bar detail -->
      <rect class="gbar" x="1258" y="722" width="3" height="83"/>
      <rect class="gbar" x="1273" y="722" width="3" height="83"/>
      <path class="glink" d="M1261 741h12M1261 786h12"/>
      <path class="wline" d="M1268 741 1290 766 1268 786M1290 766H1369"/>
      <text class="cad f11" x="1293" y="764" textLength="76" lengthAdjust="spacingAndGlyphs">拉结筋均为Φ6@600</text>
      <text class="cad f11" x="1293" y="779" textLength="46" lengthAdjust="spacingAndGlyphs">呈梅花状布置</text>

      <!-- notes -->
      <text class="cad f9" x="1211" y="984" textLength="108" lengthAdjust="spacingAndGlyphs">1. 未标注的梁、墙均轴线居中。</text>
      <text class="cad f9" x="1211" y="1000" textLength="176" lengthAdjust="spacingAndGlyphs">2. 未标注的剪力墙水平及竖向钢筋均为Φ8@200。</text>
      <text class="cad f9" x="1226" y="1015" textLength="171" lengthAdjust="spacingAndGlyphs">所有剪力墙拉结筋均为Φ6@600，呈梅花状布置。</text>

      <!-- sheet title -->
      <text class="cad ttl" x="677" y="1061" textLength="139" lengthAdjust="spacingAndGlyphs">三层墙、梁布置图</text>
      <text class="cad ttl2" x="823" y="1062">1:100</text>
      <line class="underbar" x1="676" y1="1069" x2="862" y2="1069"/>
      <text class="cad f11" x="708" y="1083" textLength="78" lengthAdjust="spacingAndGlyphs">墙: 7.110~10.300</text>
      <text class="cad f11" x="708" y="1096" textLength="78" lengthAdjust="spacingAndGlyphs">梁: 结构标高为10.30</text>

      <text class="cad f9" x="33" y="1082">Φ6@150，</text>
      <text class="cad f9" x="33" y="1097" textLength="84" lengthAdjust="spacingAndGlyphs">边缘构件加密区同框架柱。</text>

      <!-- UCS icon -->
      <path class="ucs" d="M60 1223V1268M65 1273H109"/>
      <rect class="ucs" x="56" y="1268" width="9" height="9"/>
      <text class="ucstxt" x="62" y="1219">Y</text>
      <text class="ucstxt" x="113" y="1271">X</text>

      <!-- view cube -->
      <circle class="ring" cx="1484" cy="209" r="53"/>
      <rect class="cube" x="1459" y="184" width="50" height="50"/>
      <rect class="cube2" x="1469" y="193" width="31" height="32"/>
      <text class="cube4" x="1484" y="219" text-anchor="middle">上</text>
      <text class="dirs" x="1484" y="163" text-anchor="middle">北</text>
      <text class="dirs" x="1484" y="272" text-anchor="middle">南</text>
      <text class="dirs" x="1429" y="217" text-anchor="middle">西</text>
      <text class="dirs" x="1539" y="217" text-anchor="middle">东</text>
    `;
  }

  render() {
    return html`<div class="win">
        ${this.titleBar()}
        <div class="menu">
          ${MENU.map((m) => html`<span class="${m === 'Express' ? 'exp' : ''}">${m}</span>`)}
          <div class="winbtns">
            <svg viewBox="0 0 13 13"><path class="winline" d="M2 11h7"/></svg>
            <svg viewBox="0 0 13 13"><path class="winline" d="M1 4h8v8H1zM4 4V1h8v8H9"/></svg>
            <svg viewBox="0 0 13 13"><path class="winline" d="M1 1l11 11M12 1 1 12"/></svg>
          </div>
        </div>
        <div class="tabs">
          <div class="tab t1">开始</div>
          <div class="tab t2"><span>别墅结构*</span><span class="x">×</span></div>
          <div class="tab t3"><span>别墅最后的建筑施工图*</span><span class="x">×</span></div>
          <div class="tab t4">+</div>
        </div>
        ${this.toolbars()}
        <div class="main">
          <div class="side l">
            <div class="dock"><span class="dgrip"></span>${LEFT.map((n) => html`<span class="dk-i">${icon(n)}</span>`)}</div>
          </div>
          <div class="canvas">
            <svg class="d" width="1533" height="1173" viewBox="32 128 1533 1173">${this.drawing()}</svg>
            <div class="wcs">WCS ▽</div>
            <div class="hist">
              <span>命令: _textedit</span>
              <span>当前设置: 编辑模式 = Multiple</span>
              <span>选择注释对象或 [放弃(U)/模式(M)]: *取消*</span>
            </div>
            <div class="cmd">
              <div class="cmd-l"><span class="gp"></span><span class="x">×</span>${icon('wrench')}</div>
              <div class="cmd-r">
                <span class="cmd-ic"></span><span class="darrow"></span>
                <span class="cmd-t">键入命令</span>
                <span class="uarrow"></span>
              </div>
            </div>
          </div>
          <div class="side r">
            <div class="dock"><span class="dgrip"></span>${RIGHT.map((n) => html`<span class="dk-i">${icon(n)}</span>`)}</div>
          </div>
        </div>
        <div class="status">
          <div class="ltabs">
            <div class="ltab lt1">模型</div>
            <div class="ltab lt2">Layout1</div>
            <div class="ltab lt3">+</div>
          </div>
          <div class="sg coords">2234347.8270, 388422.2945, 0.0000</div>
          <div class="sg sm">模型</div>
          ${this.statusGroup(STATUS)}
          <div class="sg s6">
            <span class="sk on">${icon('annov')}</span>
            <span class="sk">${icon('annov')}</span>
            <span class="sk">${icon('annov')}</span>
            <span class="s-text">1:1 / 100%</span>
            <span class="sv"><span class="arrow"></span></span>
          </div>
          ${this.statusGroup(STATUS2)}
          <div class="sg s8">
            <span class="sk">${icon('ruler')}</span>
            <span class="s-dec">小数</span>
            <span class="sv"><span class="arrow"></span></span>
          </div>
          ${this.statusGroup(STATUS3)}
        </div>
      </div>
      <svg class="stamp" width="1600" height="1333" viewBox="0 0 1600 1333">
        ${WATERMARKS.map(
          ([x, y]) => svg`<text class="wm" transform="translate(${x} ${y}) rotate(-45)" textLength="404">知末网 www.znzmo.com</text>`,
        )}
        <text class="brand" x="1406" y="1257">知末</text>
        <text class="idt" x="1361" y="1305">ID: 1177630684</text>
      </svg>`;
  }
}

declare global {
  interface HTMLElementTagNameMap {
    'app-root': AppRoot;
  }
}
